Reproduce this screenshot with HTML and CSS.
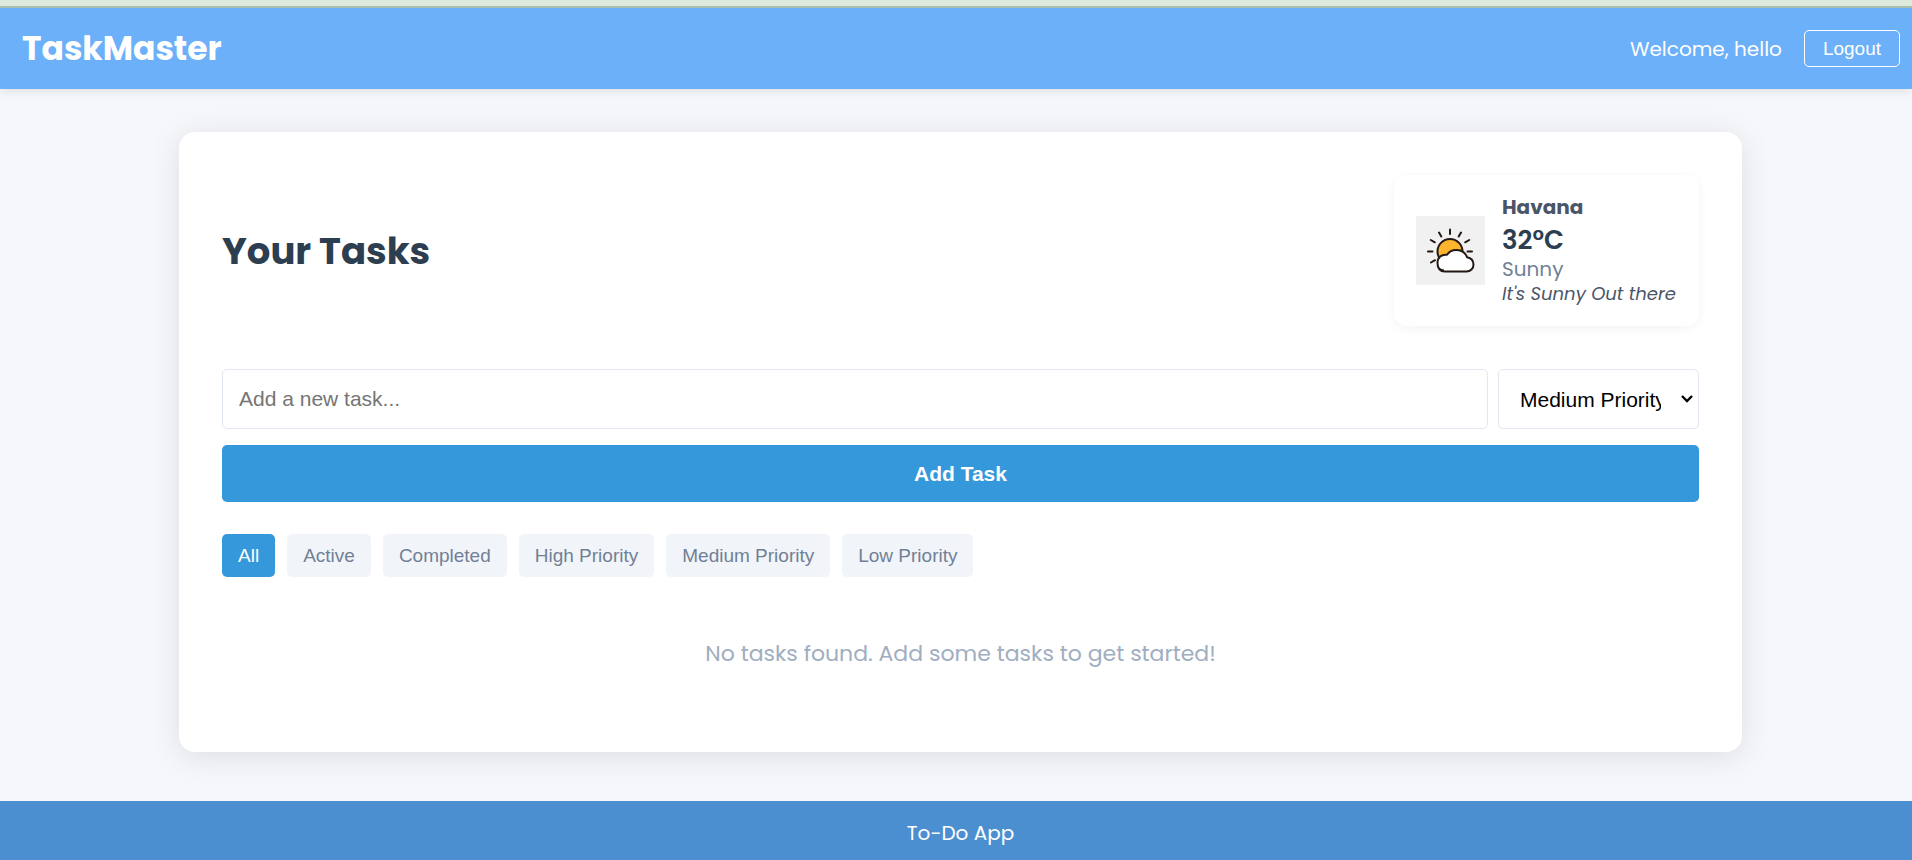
FILE: index.html
```html
<!DOCTYPE html>
<html lang="en">
<head>
<meta charset="utf-8">
<title>TaskMaster</title>
<link rel="stylesheet" href="styles.css">
</head>
<body>
<header class="navbar">
  <h1 class="brand">TaskMaster</h1>
  <div class="user">
    <span class="welcome">Welcome, hello</span>
    <button class="logout" type="button">Logout</button>
  </div>
</header>
<main class="main">
  <section class="card">
    <div class="card-header">
      <h2 class="title">Your Tasks</h2>
      <div class="weather">
        <svg class="weather-icon" viewBox="0 0 69 69" role="img" aria-label="Sunny">
          <rect width="69" height="69" fill="#f1f1f1"/>
          <circle cx="34" cy="35.500" r="12.500" fill="#fbb42c" stroke="#231815" stroke-width="2"/>
          <path d="M28 54.500C24 54.500 21.500 51.500 21.500 47C21.500 41.500 25.500 38 31 38.800C33.500 35 37 33.800 41 34C46 34.300 49.500 37 51 41.200C55 42 57.500 45 57.500 48.500C57.500 52.500 54.500 55.500 50.500 55.500H29Q21.500 55.500 21.500 47" fill="#fff" stroke="#231815" stroke-width="2" stroke-linejoin="round"/>
          <path d="M34 13.500V18M23 16.500L25.300 20.500M45 16.500L42.700 20.500M14.800 24L18.800 26.300M53.200 24L49.200 26.300M12 35.500H16.500M51.500 35.500H56M15 46.500L19 44.200" fill="none" stroke="#231815" stroke-width="2" stroke-linecap="round"/>
        </svg>
        <div class="weather-info">
          <div class="city">Havana</div>
          <div class="temp">32°C</div>
          <div class="condition">Sunny</div>
          <div class="note">It's Sunny Out there</div>
        </div>
      </div>
    </div>
    <form class="task-form">
      <input class="task-input" type="text" placeholder="Add a new task..." aria-label="New task">
      <select class="priority" aria-label="Priority">
        <option>Low Priority</option>
        <option selected>Medium Priority</option>
        <option>High Priority</option>
      </select>
      <button class="add" type="button">Add Task</button>
    </form>
    <div class="filters">
      <button class="filter active" type="button">All</button>
      <button class="filter" type="button">Active</button>
      <button class="filter" type="button">Completed</button>
      <button class="filter" type="button">High Priority</button>
      <button class="filter" type="button">Medium Priority</button>
      <button class="filter" type="button">Low Priority</button>
    </div>
    <p class="empty">No tasks found. Add some tasks to get started!</p>
  </section>
</main>
<footer class="footer">To-Do App</footer>
</body>
</html>
```

FILE: styles.css
```css
* { box-sizing: border-box; margin: 0; }
body {
  min-height: 100vh;
  display: flex;
  flex-direction: column;
  border-top: 6px solid #dce9dc;
  background: #f5f7fb;
  color: #2c3e50;
  font-family: Poppins, Inter, sans-serif;
  font-size: 20px;
}
button, input, select { font-family: Arial, "Liberation Sans", sans-serif; }
.navbar {
  display: flex;
  justify-content: space-between;
  align-items: center;
  padding: 22px 12px 22px 22px;
  border-top: 2px solid #a9bfae;
  background: #6bb0f9;
  color: #fff;
  box-shadow: 0 2px 10px rgba(0, 0, 0, 0.1);
}
.brand { font-size: 33px; line-height: 37px; font-weight: 700; }
.user { display: flex; align-items: center; gap: 22px; }
.welcome { font-size: 20px; line-height: 28px; }
.logout {
  height: 37px;
  padding: 0 18px;
  border: 1px solid #fff;
  border-radius: 5px;
  background: transparent;
  color: #fff;
  font-size: 19px;
}
.main { flex: 1; padding: 43px 170px 49px 179px; }
.card {
  padding: 43px;
  border-radius: 16px;
  background: #fff;
  box-shadow: 0 5px 32px rgba(0, 0, 0, 0.1);
}
.card-header {
  display: flex;
  justify-content: space-between;
  align-items: center;
  margin-bottom: 43px;
}
.title { font-size: 37px; font-weight: 700; }
.weather {
  display: flex;
  align-items: center;
  gap: 17px;
  min-width: 305px;
  padding: 18px 22px;
  border-radius: 13px;
  box-shadow: 0 2px 11px rgba(0, 0, 0, 0.05);
}
.weather-icon { width: 69px; height: 69px; }
.weather-info { color: #4a5568; white-space: nowrap; }
.city { font-size: 20px; line-height: 28px; font-weight: 700; }
.temp { font-size: 26px; line-height: 38px; font-weight: 600; color: #2c3e50; }
.condition { font-size: 20px; line-height: 20px; color: #718096; }
.note { font-size: 18px; line-height: 29px; font-style: italic; }
.task-form {
  display: grid;
  grid-template-columns: 1fr 201px;
  gap: 16px 10px;
  margin-bottom: 32px;
}
.task-input, .priority {
  height: 60px;
  border: 1px solid #e2e8f0;
  border-radius: 5px;
  background: #fff;
  font-size: 21px;
}
.task-input { padding: 0 16px; }
.priority {
  appearance: none;
  padding: 0 37px 0 21px;
  background: #fff url("data:image/svg+xml,%3Csvg xmlns='http://www.w3.org/2000/svg' width='12' height='8' viewBox='0 0 12 8'%3E%3Cpath d='M1 1L6 6L11 1' fill='none' stroke='black' stroke-width='2.400'/%3E%3C/svg%3E") no-repeat right 5px center;
  color: #000;
}
.add {
  grid-column: 1 / -1;
  height: 57px;
  border: 0;
  border-radius: 5px;
  background: #3498db;
  color: #fff;
  font-size: 21px;
  font-weight: 700;
}
.filters { display: flex; gap: 12px; }
.filter {
  height: 43px;
  padding: 0 16px;
  border: 0;
  border-radius: 5px;
  background: #f1f5f9;
  color: #718096;
  font-size: 19px;
}
.filter.active { background: #3498db; color: #fff; }
.empty {
  padding: 60px 0 38px;
  color: #a0aec0;
  font-size: 22px;
  line-height: 34px;
  text-align: center;
}
.footer {
  padding: 19px 0 13px 9px;
  background: #4c8fd0;
  color: #fff;
  font-size: 20px;
  line-height: 27px;
  text-align: center;
}
```
